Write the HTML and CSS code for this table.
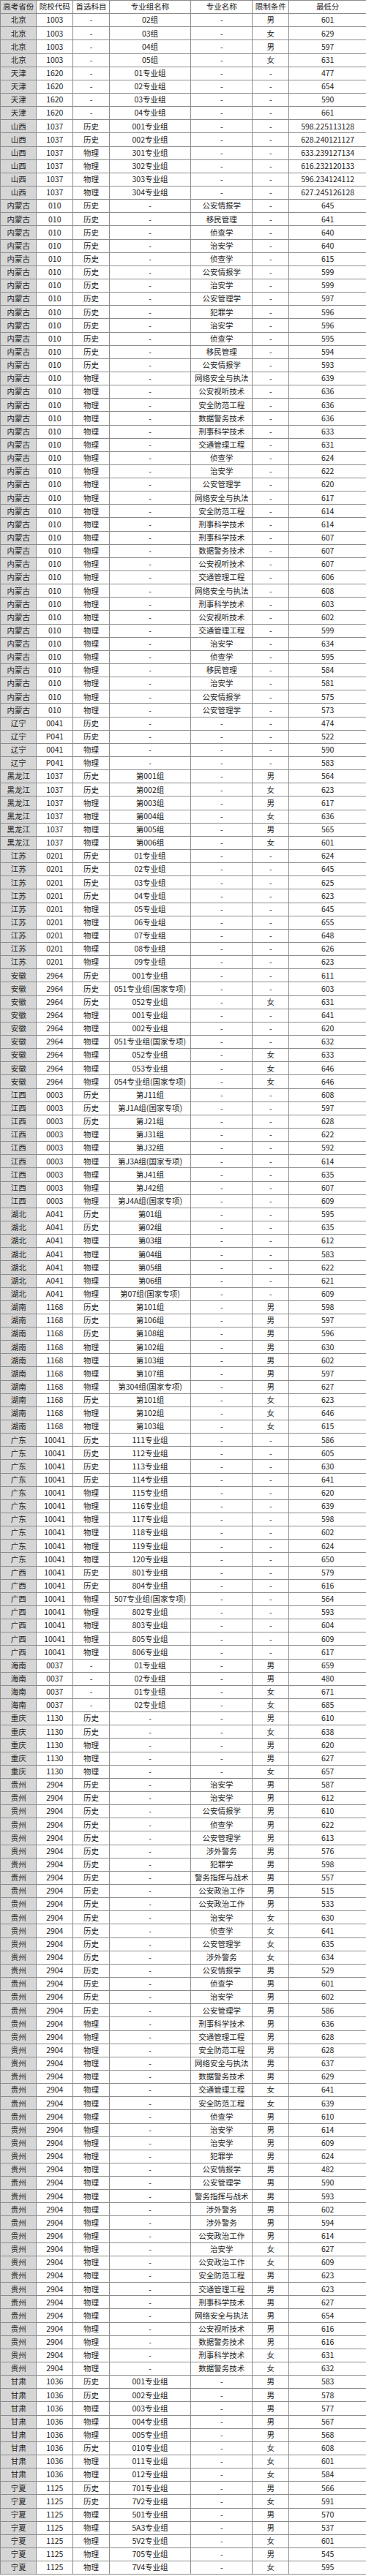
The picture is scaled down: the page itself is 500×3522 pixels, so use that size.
FILE: index.html
```html
<!DOCTYPE html>
<html lang="zh-CN">
<head>
<meta charset="utf-8">
<title>分数表</title>
<link rel="stylesheet" href="styles.css">
</head>
<body>
<table class="grid">
<colgroup><col class="c1"><col class="c2"><col class="c3"><col class="c4"><col class="c5"><col class="c6"><col class="c7"></colgroup>
<tr><td>高考省份</td><td>院校代码</td><td>首选科目</td><td>专业组名称</td><td>专业名称</td><td>限制条件</td><td>最低分</td></tr>
<tr><td>北京</td><td>1003</td><td>-</td><td>02组</td><td>-</td><td>男</td><td>601</td></tr>
<tr><td>北京</td><td>1003</td><td>-</td><td>03组</td><td>-</td><td>女</td><td>629</td></tr>
<tr><td>北京</td><td>1003</td><td>-</td><td>04组</td><td>-</td><td>男</td><td>597</td></tr>
<tr><td>北京</td><td>1003</td><td>-</td><td>05组</td><td>-</td><td>女</td><td>631</td></tr>
<tr><td>天津</td><td>1620</td><td>-</td><td>01专业组</td><td>-</td><td>-</td><td>477</td></tr>
<tr><td>天津</td><td>1620</td><td>-</td><td>02专业组</td><td>-</td><td>-</td><td>654</td></tr>
<tr><td>天津</td><td>1620</td><td>-</td><td>03专业组</td><td>-</td><td>-</td><td>590</td></tr>
<tr><td>天津</td><td>1620</td><td>-</td><td>04专业组</td><td>-</td><td>-</td><td>661</td></tr>
<tr><td>山西</td><td>1037</td><td>历史</td><td>001专业组</td><td>-</td><td>-</td><td>598.225113128</td></tr>
<tr><td>山西</td><td>1037</td><td>历史</td><td>002专业组</td><td>-</td><td>-</td><td>628.240121127</td></tr>
<tr><td>山西</td><td>1037</td><td>物理</td><td>301专业组</td><td>-</td><td>-</td><td>633.239127134</td></tr>
<tr><td>山西</td><td>1037</td><td>物理</td><td>302专业组</td><td>-</td><td>-</td><td>616.232120133</td></tr>
<tr><td>山西</td><td>1037</td><td>物理</td><td>303专业组</td><td>-</td><td>-</td><td>596.234124112</td></tr>
<tr><td>山西</td><td>1037</td><td>物理</td><td>304专业组</td><td>-</td><td>-</td><td>627.245126128</td></tr>
<tr><td>内蒙古</td><td>010</td><td>历史</td><td>-</td><td>公安情报学</td><td>-</td><td>645</td></tr>
<tr><td>内蒙古</td><td>010</td><td>历史</td><td>-</td><td>移民管理</td><td>-</td><td>641</td></tr>
<tr><td>内蒙古</td><td>010</td><td>历史</td><td>-</td><td>侦查学</td><td>-</td><td>640</td></tr>
<tr><td>内蒙古</td><td>010</td><td>历史</td><td>-</td><td>治安学</td><td>-</td><td>640</td></tr>
<tr><td>内蒙古</td><td>010</td><td>历史</td><td>-</td><td>侦查学</td><td>-</td><td>615</td></tr>
<tr><td>内蒙古</td><td>010</td><td>历史</td><td>-</td><td>公安情报学</td><td>-</td><td>599</td></tr>
<tr><td>内蒙古</td><td>010</td><td>历史</td><td>-</td><td>治安学</td><td>-</td><td>599</td></tr>
<tr><td>内蒙古</td><td>010</td><td>历史</td><td>-</td><td>公安管理学</td><td>-</td><td>597</td></tr>
<tr><td>内蒙古</td><td>010</td><td>历史</td><td>-</td><td>犯罪学</td><td>-</td><td>596</td></tr>
<tr><td>内蒙古</td><td>010</td><td>历史</td><td>-</td><td>治安学</td><td>-</td><td>596</td></tr>
<tr><td>内蒙古</td><td>010</td><td>历史</td><td>-</td><td>侦查学</td><td>-</td><td>595</td></tr>
<tr><td>内蒙古</td><td>010</td><td>历史</td><td>-</td><td>移民管理</td><td>-</td><td>594</td></tr>
<tr><td>内蒙古</td><td>010</td><td>历史</td><td>-</td><td>公安情报学</td><td>-</td><td>593</td></tr>
<tr><td>内蒙古</td><td>010</td><td>物理</td><td>-</td><td>网络安全与执法</td><td>-</td><td>639</td></tr>
<tr><td>内蒙古</td><td>010</td><td>物理</td><td>-</td><td>公安视听技术</td><td>-</td><td>636</td></tr>
<tr><td>内蒙古</td><td>010</td><td>物理</td><td>-</td><td>安全防范工程</td><td>-</td><td>636</td></tr>
<tr><td>内蒙古</td><td>010</td><td>物理</td><td>-</td><td>数据警务技术</td><td>-</td><td>636</td></tr>
<tr><td>内蒙古</td><td>010</td><td>物理</td><td>-</td><td>刑事科学技术</td><td>-</td><td>633</td></tr>
<tr><td>内蒙古</td><td>010</td><td>物理</td><td>-</td><td>交通管理工程</td><td>-</td><td>631</td></tr>
<tr><td>内蒙古</td><td>010</td><td>物理</td><td>-</td><td>侦查学</td><td>-</td><td>624</td></tr>
<tr><td>内蒙古</td><td>010</td><td>物理</td><td>-</td><td>治安学</td><td>-</td><td>622</td></tr>
<tr><td>内蒙古</td><td>010</td><td>物理</td><td>-</td><td>公安管理学</td><td>-</td><td>620</td></tr>
<tr><td>内蒙古</td><td>010</td><td>物理</td><td>-</td><td>网络安全与执法</td><td>-</td><td>617</td></tr>
<tr><td>内蒙古</td><td>010</td><td>物理</td><td>-</td><td>安全防范工程</td><td>-</td><td>614</td></tr>
<tr><td>内蒙古</td><td>010</td><td>物理</td><td>-</td><td>刑事科学技术</td><td>-</td><td>614</td></tr>
<tr><td>内蒙古</td><td>010</td><td>物理</td><td>-</td><td>刑事科学技术</td><td>-</td><td>607</td></tr>
<tr><td>内蒙古</td><td>010</td><td>物理</td><td>-</td><td>数据警务技术</td><td>-</td><td>607</td></tr>
<tr><td>内蒙古</td><td>010</td><td>物理</td><td>-</td><td>公安视听技术</td><td>-</td><td>607</td></tr>
<tr><td>内蒙古</td><td>010</td><td>物理</td><td>-</td><td>交通管理工程</td><td>-</td><td>606</td></tr>
<tr><td>内蒙古</td><td>010</td><td>物理</td><td>-</td><td>网络安全与执法</td><td>-</td><td>608</td></tr>
<tr><td>内蒙古</td><td>010</td><td>物理</td><td>-</td><td>刑事科学技术</td><td>-</td><td>603</td></tr>
<tr><td>内蒙古</td><td>010</td><td>物理</td><td>-</td><td>公安视听技术</td><td>-</td><td>602</td></tr>
<tr><td>内蒙古</td><td>010</td><td>物理</td><td>-</td><td>交通管理工程</td><td>-</td><td>599</td></tr>
<tr><td>内蒙古</td><td>010</td><td>物理</td><td>-</td><td>治安学</td><td>-</td><td>634</td></tr>
<tr><td>内蒙古</td><td>010</td><td>物理</td><td>-</td><td>侦查学</td><td>-</td><td>595</td></tr>
<tr><td>内蒙古</td><td>010</td><td>物理</td><td>-</td><td>移民管理</td><td>-</td><td>584</td></tr>
<tr><td>内蒙古</td><td>010</td><td>物理</td><td>-</td><td>治安学</td><td>-</td><td>581</td></tr>
<tr><td>内蒙古</td><td>010</td><td>物理</td><td>-</td><td>公安情报学</td><td>-</td><td>575</td></tr>
<tr><td>内蒙古</td><td>010</td><td>物理</td><td>-</td><td>公安管理学</td><td>-</td><td>573</td></tr>
<tr><td>辽宁</td><td>0041</td><td>历史</td><td>-</td><td>-</td><td>-</td><td>474</td></tr>
<tr><td>辽宁</td><td>P041</td><td>历史</td><td>-</td><td>-</td><td>-</td><td>522</td></tr>
<tr><td>辽宁</td><td>0041</td><td>物理</td><td>-</td><td>-</td><td>-</td><td>590</td></tr>
<tr><td>辽宁</td><td>P041</td><td>物理</td><td>-</td><td>-</td><td>-</td><td>583</td></tr>
<tr><td>黑龙江</td><td>1037</td><td>历史</td><td>第001组</td><td>-</td><td>男</td><td>564</td></tr>
<tr><td>黑龙江</td><td>1037</td><td>历史</td><td>第002组</td><td>-</td><td>女</td><td>623</td></tr>
<tr><td>黑龙江</td><td>1037</td><td>物理</td><td>第003组</td><td>-</td><td>男</td><td>617</td></tr>
<tr><td>黑龙江</td><td>1037</td><td>物理</td><td>第004组</td><td>-</td><td>女</td><td>636</td></tr>
<tr><td>黑龙江</td><td>1037</td><td>物理</td><td>第005组</td><td>-</td><td>男</td><td>565</td></tr>
<tr><td>黑龙江</td><td>1037</td><td>物理</td><td>第006组</td><td>-</td><td>女</td><td>601</td></tr>
<tr><td>江苏</td><td>0201</td><td>历史</td><td>01专业组</td><td>-</td><td>-</td><td>624</td></tr>
<tr><td>江苏</td><td>0201</td><td>历史</td><td>02专业组</td><td>-</td><td>-</td><td>645</td></tr>
<tr><td>江苏</td><td>0201</td><td>历史</td><td>03专业组</td><td>-</td><td>-</td><td>625</td></tr>
<tr><td>江苏</td><td>0201</td><td>历史</td><td>04专业组</td><td>-</td><td>-</td><td>623</td></tr>
<tr><td>江苏</td><td>0201</td><td>物理</td><td>05专业组</td><td>-</td><td>-</td><td>645</td></tr>
<tr><td>江苏</td><td>0201</td><td>物理</td><td>06专业组</td><td>-</td><td>-</td><td>655</td></tr>
<tr><td>江苏</td><td>0201</td><td>物理</td><td>07专业组</td><td>-</td><td>-</td><td>648</td></tr>
<tr><td>江苏</td><td>0201</td><td>物理</td><td>08专业组</td><td>-</td><td>-</td><td>626</td></tr>
<tr><td>江苏</td><td>0201</td><td>物理</td><td>09专业组</td><td>-</td><td>-</td><td>623</td></tr>
<tr><td>安徽</td><td>2964</td><td>历史</td><td>001专业组</td><td>-</td><td>-</td><td>611</td></tr>
<tr><td>安徽</td><td>2964</td><td>历史</td><td>051专业组(国家专项)</td><td>-</td><td>-</td><td>603</td></tr>
<tr><td>安徽</td><td>2964</td><td>历史</td><td>052专业组</td><td>-</td><td>女</td><td>631</td></tr>
<tr><td>安徽</td><td>2964</td><td>物理</td><td>001专业组</td><td>-</td><td>-</td><td>641</td></tr>
<tr><td>安徽</td><td>2964</td><td>物理</td><td>002专业组</td><td>-</td><td>-</td><td>620</td></tr>
<tr><td>安徽</td><td>2964</td><td>物理</td><td>051专业组(国家专项)</td><td>-</td><td>-</td><td>632</td></tr>
<tr><td>安徽</td><td>2964</td><td>物理</td><td>052专业组</td><td>-</td><td>女</td><td>633</td></tr>
<tr><td>安徽</td><td>2964</td><td>物理</td><td>053专业组</td><td>-</td><td>女</td><td>646</td></tr>
<tr><td>安徽</td><td>2964</td><td>物理</td><td>054专业组(国家专项)</td><td>-</td><td>女</td><td>646</td></tr>
<tr><td>江西</td><td>0003</td><td>历史</td><td>第J11组</td><td>-</td><td>-</td><td>608</td></tr>
<tr><td>江西</td><td>0003</td><td>历史</td><td>第J1A组(国家专项)</td><td>-</td><td>-</td><td>597</td></tr>
<tr><td>江西</td><td>0003</td><td>历史</td><td>第J21组</td><td>-</td><td>-</td><td>628</td></tr>
<tr><td>江西</td><td>0003</td><td>物理</td><td>第J31组</td><td>-</td><td>-</td><td>622</td></tr>
<tr><td>江西</td><td>0003</td><td>物理</td><td>第J32组</td><td>-</td><td>-</td><td>592</td></tr>
<tr><td>江西</td><td>0003</td><td>物理</td><td>第J3A组(国家专项)</td><td>-</td><td>-</td><td>614</td></tr>
<tr><td>江西</td><td>0003</td><td>物理</td><td>第J41组</td><td>-</td><td>-</td><td>635</td></tr>
<tr><td>江西</td><td>0003</td><td>物理</td><td>第J42组</td><td>-</td><td>-</td><td>607</td></tr>
<tr><td>江西</td><td>0003</td><td>物理</td><td>第J4A组(国家专项)</td><td>-</td><td>-</td><td>609</td></tr>
<tr><td>湖北</td><td>A041</td><td>历史</td><td>第01组</td><td>-</td><td>-</td><td>595</td></tr>
<tr><td>湖北</td><td>A041</td><td>历史</td><td>第02组</td><td>-</td><td>-</td><td>635</td></tr>
<tr><td>湖北</td><td>A041</td><td>物理</td><td>第03组</td><td>-</td><td>-</td><td>612</td></tr>
<tr><td>湖北</td><td>A041</td><td>物理</td><td>第04组</td><td>-</td><td>-</td><td>583</td></tr>
<tr><td>湖北</td><td>A041</td><td>物理</td><td>第05组</td><td>-</td><td>-</td><td>622</td></tr>
<tr><td>湖北</td><td>A041</td><td>物理</td><td>第06组</td><td>-</td><td>-</td><td>621</td></tr>
<tr><td>湖北</td><td>A041</td><td>物理</td><td>第07组(国家专项)</td><td>-</td><td>-</td><td>609</td></tr>
<tr><td>湖南</td><td>1168</td><td>历史</td><td>第101组</td><td>-</td><td>男</td><td>598</td></tr>
<tr><td>湖南</td><td>1168</td><td>历史</td><td>第106组</td><td>-</td><td>男</td><td>597</td></tr>
<tr><td>湖南</td><td>1168</td><td>历史</td><td>第108组</td><td>-</td><td>男</td><td>596</td></tr>
<tr><td>湖南</td><td>1168</td><td>物理</td><td>第102组</td><td>-</td><td>男</td><td>630</td></tr>
<tr><td>湖南</td><td>1168</td><td>物理</td><td>第103组</td><td>-</td><td>男</td><td>602</td></tr>
<tr><td>湖南</td><td>1168</td><td>物理</td><td>第107组</td><td>-</td><td>男</td><td>597</td></tr>
<tr><td>湖南</td><td>1168</td><td>物理</td><td>第304组(国家专项)</td><td>-</td><td>男</td><td>627</td></tr>
<tr><td>湖南</td><td>1168</td><td>历史</td><td>第101组</td><td>-</td><td>女</td><td>623</td></tr>
<tr><td>湖南</td><td>1168</td><td>物理</td><td>第102组</td><td>-</td><td>女</td><td>646</td></tr>
<tr><td>湖南</td><td>1168</td><td>物理</td><td>第103组</td><td>-</td><td>女</td><td>615</td></tr>
<tr><td>广东</td><td>10041</td><td>历史</td><td>111专业组</td><td>-</td><td>-</td><td>586</td></tr>
<tr><td>广东</td><td>10041</td><td>历史</td><td>112专业组</td><td>-</td><td>-</td><td>605</td></tr>
<tr><td>广东</td><td>10041</td><td>历史</td><td>113专业组</td><td>-</td><td>-</td><td>630</td></tr>
<tr><td>广东</td><td>10041</td><td>历史</td><td>114专业组</td><td>-</td><td>-</td><td>641</td></tr>
<tr><td>广东</td><td>10041</td><td>物理</td><td>115专业组</td><td>-</td><td>-</td><td>620</td></tr>
<tr><td>广东</td><td>10041</td><td>物理</td><td>116专业组</td><td>-</td><td>-</td><td>639</td></tr>
<tr><td>广东</td><td>10041</td><td>物理</td><td>117专业组</td><td>-</td><td>-</td><td>598</td></tr>
<tr><td>广东</td><td>10041</td><td>物理</td><td>118专业组</td><td>-</td><td>-</td><td>602</td></tr>
<tr><td>广东</td><td>10041</td><td>物理</td><td>119专业组</td><td>-</td><td>-</td><td>624</td></tr>
<tr><td>广东</td><td>10041</td><td>物理</td><td>120专业组</td><td>-</td><td>-</td><td>650</td></tr>
<tr><td>广西</td><td>10041</td><td>历史</td><td>801专业组</td><td>-</td><td>-</td><td>579</td></tr>
<tr><td>广西</td><td>10041</td><td>历史</td><td>804专业组</td><td>-</td><td>-</td><td>616</td></tr>
<tr><td>广西</td><td>10041</td><td>物理</td><td>507专业组(国家专项)</td><td>-</td><td>-</td><td>564</td></tr>
<tr><td>广西</td><td>10041</td><td>物理</td><td>802专业组</td><td>-</td><td>-</td><td>593</td></tr>
<tr><td>广西</td><td>10041</td><td>物理</td><td>803专业组</td><td>-</td><td>-</td><td>604</td></tr>
<tr><td>广西</td><td>10041</td><td>物理</td><td>805专业组</td><td>-</td><td>-</td><td>609</td></tr>
<tr><td>广西</td><td>10041</td><td>物理</td><td>806专业组</td><td>-</td><td>-</td><td>617</td></tr>
<tr><td>海南</td><td>0037</td><td>-</td><td>01专业组</td><td>-</td><td>男</td><td>659</td></tr>
<tr><td>海南</td><td>0037</td><td>-</td><td>02专业组</td><td>-</td><td>男</td><td>480</td></tr>
<tr><td>海南</td><td>0037</td><td>-</td><td>01专业组</td><td>-</td><td>女</td><td>671</td></tr>
<tr><td>海南</td><td>0037</td><td>-</td><td>02专业组</td><td>-</td><td>女</td><td>685</td></tr>
<tr><td>重庆</td><td>1130</td><td>历史</td><td>-</td><td>-</td><td>男</td><td>610</td></tr>
<tr><td>重庆</td><td>1130</td><td>历史</td><td>-</td><td>-</td><td>女</td><td>638</td></tr>
<tr><td>重庆</td><td>1130</td><td>物理</td><td>-</td><td>-</td><td>男</td><td>620</td></tr>
<tr><td>重庆</td><td>1130</td><td>物理</td><td>-</td><td>-</td><td>男</td><td>627</td></tr>
<tr><td>重庆</td><td>1130</td><td>物理</td><td>-</td><td>-</td><td>女</td><td>657</td></tr>
<tr><td>贵州</td><td>2904</td><td>历史</td><td>-</td><td>治安学</td><td>男</td><td>587</td></tr>
<tr><td>贵州</td><td>2904</td><td>历史</td><td>-</td><td>治安学</td><td>男</td><td>612</td></tr>
<tr><td>贵州</td><td>2904</td><td>历史</td><td>-</td><td>公安情报学</td><td>男</td><td>610</td></tr>
<tr><td>贵州</td><td>2904</td><td>历史</td><td>-</td><td>侦查学</td><td>男</td><td>622</td></tr>
<tr><td>贵州</td><td>2904</td><td>历史</td><td>-</td><td>公安管理学</td><td>男</td><td>613</td></tr>
<tr><td>贵州</td><td>2904</td><td>历史</td><td>-</td><td>涉外警务</td><td>男</td><td>576</td></tr>
<tr><td>贵州</td><td>2904</td><td>历史</td><td>-</td><td>犯罪学</td><td>男</td><td>598</td></tr>
<tr><td>贵州</td><td>2904</td><td>历史</td><td>-</td><td>警务指挥与战术</td><td>男</td><td>557</td></tr>
<tr><td>贵州</td><td>2904</td><td>历史</td><td>-</td><td>公安政治工作</td><td>男</td><td>515</td></tr>
<tr><td>贵州</td><td>2904</td><td>历史</td><td>-</td><td>公安政治工作</td><td>男</td><td>533</td></tr>
<tr><td>贵州</td><td>2904</td><td>历史</td><td>-</td><td>治安学</td><td>女</td><td>630</td></tr>
<tr><td>贵州</td><td>2904</td><td>历史</td><td>-</td><td>侦查学</td><td>女</td><td>641</td></tr>
<tr><td>贵州</td><td>2904</td><td>历史</td><td>-</td><td>公安管理学</td><td>女</td><td>635</td></tr>
<tr><td>贵州</td><td>2904</td><td>历史</td><td>-</td><td>涉外警务</td><td>女</td><td>634</td></tr>
<tr><td>贵州</td><td>2904</td><td>历史</td><td>-</td><td>公安情报学</td><td>男</td><td>529</td></tr>
<tr><td>贵州</td><td>2904</td><td>历史</td><td>-</td><td>侦查学</td><td>男</td><td>601</td></tr>
<tr><td>贵州</td><td>2904</td><td>历史</td><td>-</td><td>治安学</td><td>男</td><td>602</td></tr>
<tr><td>贵州</td><td>2904</td><td>历史</td><td>-</td><td>公安管理学</td><td>男</td><td>586</td></tr>
<tr><td>贵州</td><td>2904</td><td>物理</td><td>-</td><td>刑事科学技术</td><td>男</td><td>636</td></tr>
<tr><td>贵州</td><td>2904</td><td>物理</td><td>-</td><td>交通管理工程</td><td>男</td><td>628</td></tr>
<tr><td>贵州</td><td>2904</td><td>物理</td><td>-</td><td>安全防范工程</td><td>男</td><td>628</td></tr>
<tr><td>贵州</td><td>2904</td><td>物理</td><td>-</td><td>网络安全与执法</td><td>男</td><td>637</td></tr>
<tr><td>贵州</td><td>2904</td><td>物理</td><td>-</td><td>数据警务技术</td><td>男</td><td>629</td></tr>
<tr><td>贵州</td><td>2904</td><td>物理</td><td>-</td><td>交通管理工程</td><td>女</td><td>641</td></tr>
<tr><td>贵州</td><td>2904</td><td>物理</td><td>-</td><td>安全防范工程</td><td>女</td><td>639</td></tr>
<tr><td>贵州</td><td>2904</td><td>物理</td><td>-</td><td>侦查学</td><td>男</td><td>610</td></tr>
<tr><td>贵州</td><td>2904</td><td>物理</td><td>-</td><td>治安学</td><td>男</td><td>614</td></tr>
<tr><td>贵州</td><td>2904</td><td>物理</td><td>-</td><td>治安学</td><td>男</td><td>609</td></tr>
<tr><td>贵州</td><td>2904</td><td>物理</td><td>-</td><td>犯罪学</td><td>男</td><td>624</td></tr>
<tr><td>贵州</td><td>2904</td><td>物理</td><td>-</td><td>公安情报学</td><td>男</td><td>482</td></tr>
<tr><td>贵州</td><td>2904</td><td>物理</td><td>-</td><td>公安管理学</td><td>男</td><td>590</td></tr>
<tr><td>贵州</td><td>2904</td><td>物理</td><td>-</td><td>警务指挥与战术</td><td>男</td><td>593</td></tr>
<tr><td>贵州</td><td>2904</td><td>物理</td><td>-</td><td>涉外警务</td><td>男</td><td>602</td></tr>
<tr><td>贵州</td><td>2904</td><td>物理</td><td>-</td><td>涉外警务</td><td>男</td><td>594</td></tr>
<tr><td>贵州</td><td>2904</td><td>物理</td><td>-</td><td>公安政治工作</td><td>男</td><td>614</td></tr>
<tr><td>贵州</td><td>2904</td><td>物理</td><td>-</td><td>治安学</td><td>女</td><td>627</td></tr>
<tr><td>贵州</td><td>2904</td><td>物理</td><td>-</td><td>公安政治工作</td><td>女</td><td>609</td></tr>
<tr><td>贵州</td><td>2904</td><td>物理</td><td>-</td><td>安全防范工程</td><td>男</td><td>623</td></tr>
<tr><td>贵州</td><td>2904</td><td>物理</td><td>-</td><td>交通管理工程</td><td>男</td><td>623</td></tr>
<tr><td>贵州</td><td>2904</td><td>物理</td><td>-</td><td>刑事科学技术</td><td>男</td><td>627</td></tr>
<tr><td>贵州</td><td>2904</td><td>物理</td><td>-</td><td>网络安全与执法</td><td>男</td><td>654</td></tr>
<tr><td>贵州</td><td>2904</td><td>物理</td><td>-</td><td>公安视听技术</td><td>男</td><td>616</td></tr>
<tr><td>贵州</td><td>2904</td><td>物理</td><td>-</td><td>数据警务技术</td><td>男</td><td>616</td></tr>
<tr><td>贵州</td><td>2904</td><td>物理</td><td>-</td><td>刑事科学技术</td><td>女</td><td>631</td></tr>
<tr><td>贵州</td><td>2904</td><td>物理</td><td>-</td><td>数据警务技术</td><td>女</td><td>632</td></tr>
<tr><td>甘肃</td><td>1036</td><td>历史</td><td>001专业组</td><td>-</td><td>男</td><td>583</td></tr>
<tr><td>甘肃</td><td>1036</td><td>历史</td><td>002专业组</td><td>-</td><td>男</td><td>578</td></tr>
<tr><td>甘肃</td><td>1036</td><td>物理</td><td>003专业组</td><td>-</td><td>男</td><td>577</td></tr>
<tr><td>甘肃</td><td>1036</td><td>物理</td><td>004专业组</td><td>-</td><td>男</td><td>567</td></tr>
<tr><td>甘肃</td><td>1036</td><td>物理</td><td>005专业组</td><td>-</td><td>男</td><td>568</td></tr>
<tr><td>甘肃</td><td>1036</td><td>历史</td><td>010专业组</td><td>-</td><td>女</td><td>608</td></tr>
<tr><td>甘肃</td><td>1036</td><td>物理</td><td>011专业组</td><td>-</td><td>女</td><td>601</td></tr>
<tr><td>甘肃</td><td>1036</td><td>物理</td><td>012专业组</td><td>-</td><td>女</td><td>584</td></tr>
<tr><td>宁夏</td><td>1125</td><td>历史</td><td>701专业组</td><td>-</td><td>男</td><td>566</td></tr>
<tr><td>宁夏</td><td>1125</td><td>历史</td><td>7V2专业组</td><td>-</td><td>女</td><td>591</td></tr>
<tr><td>宁夏</td><td>1125</td><td>物理</td><td>501专业组</td><td>-</td><td>男</td><td>570</td></tr>
<tr><td>宁夏</td><td>1125</td><td>物理</td><td>5A3专业组</td><td>-</td><td>男</td><td>537</td></tr>
<tr><td>宁夏</td><td>1125</td><td>物理</td><td>5V2专业组</td><td>-</td><td>女</td><td>601</td></tr>
<tr><td>宁夏</td><td>1125</td><td>物理</td><td>705专业组</td><td>-</td><td>男</td><td>545</td></tr>
<tr><td>宁夏</td><td>1125</td><td>物理</td><td>7V4专业组</td><td>-</td><td>女</td><td>595</td></tr>
</table>
</body>
</html>
```

FILE: styles.css
```css
html, body {
  margin: 0;
  padding: 0;
  background: #ffffff;
}

.grid {
  width: 500px;
  table-layout: fixed;
  border-collapse: collapse;
  font-family: "Noto Sans CJK SC", "Noto Sans", sans-serif;
  font-size: 10.5px;
  color: #1e1e1e;
}

.grid .c1 { width: 49.3px; }
.grid .c2 { width: 50px; }
.grid .c3 { width: 49.4px; }
.grid .c4 { width: 111.6px; }
.grid .c5 { width: 84px; }
.grid .c6 { width: 50px; }
.grid .c7 { width: 105.7px; }

.grid tr {
  height: 18.155px;
}

.grid td {
  border: 1px solid #8c8c8c;
  padding: 0;
  text-align: center;
  vertical-align: middle;
  line-height: 1;
  white-space: nowrap;
  overflow: hidden;
}

.grid td:first-child {
  background: #d6d6d6;
}
```
